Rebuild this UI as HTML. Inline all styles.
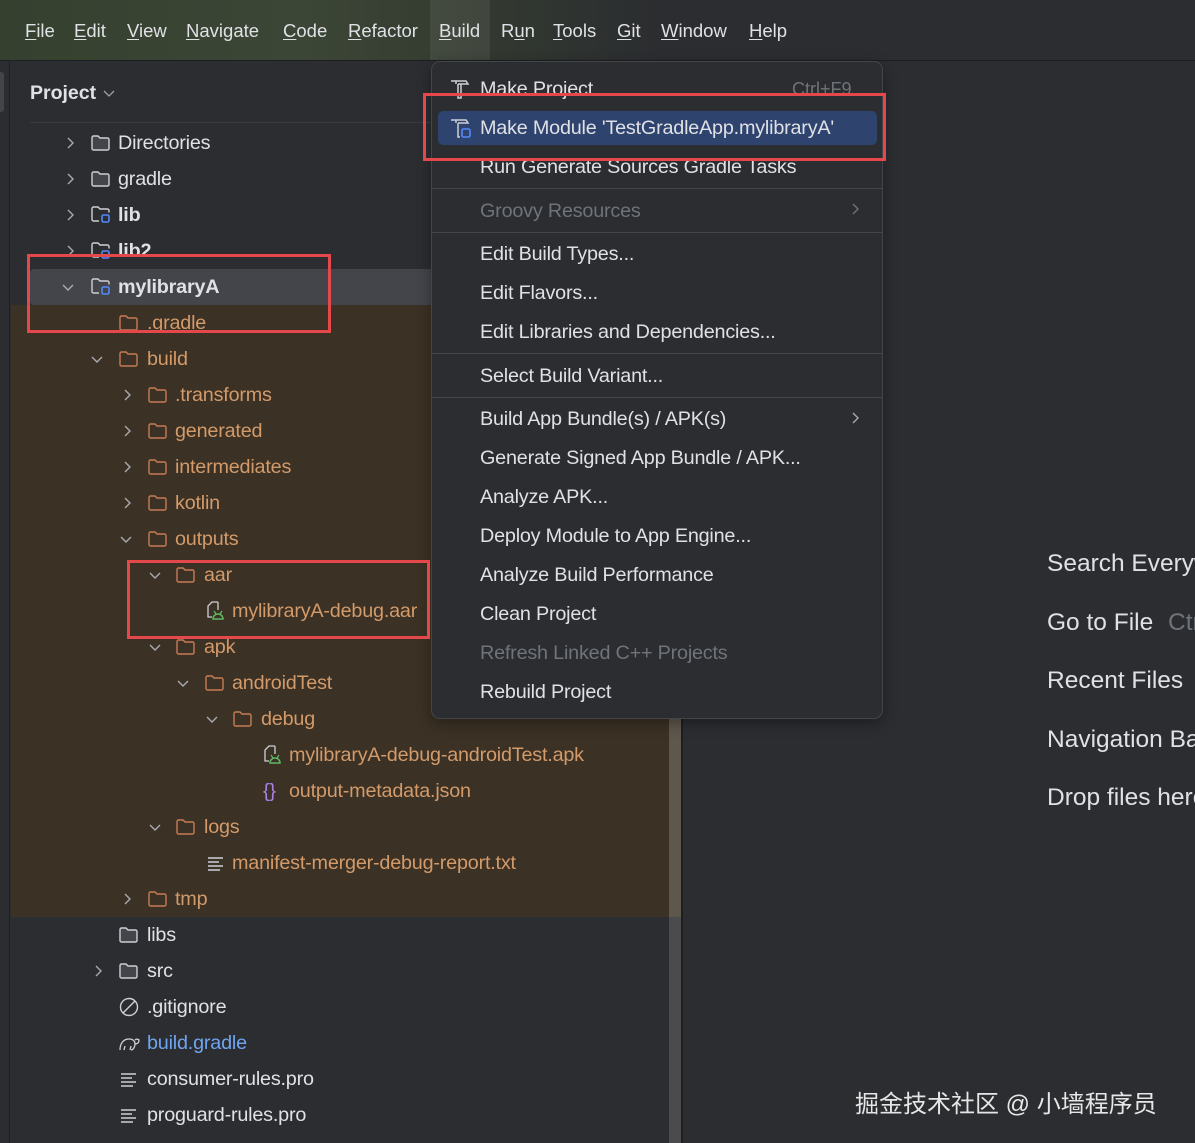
<!DOCTYPE html>
<html><head><meta charset="utf-8"><style>
*{margin:0;padding:0;box-sizing:border-box}
body{width:1195px;height:1143px;overflow:hidden;background:#2b2d30;font-family:"Liberation Sans","Noto Sans CJK SC",sans-serif;color:#dfe1e5;position:relative}
.a{position:absolute;white-space:nowrap}
.mb{position:absolute;left:0;top:0;width:1195px;height:61px;background:linear-gradient(90deg,#36402f 0%,#3c4636 25%,#333a30 40%,#2b2d30 55%,#2b2d30 100%);border-bottom:1px solid #1e1f22}
.mi{position:absolute;top:20px;font-size:18.5px;color:#dfe1e5}
.mi u{text-decoration:underline;text-underline-offset:2px}
.t{position:absolute;font-size:19.8px;line-height:24px;height:24px;white-space:nowrap;letter-spacing:-0.2px}
.o{color:#d39a6a}
.b{font-weight:bold}
.m{position:absolute;left:480px;font-size:19.8px;line-height:24px;white-space:nowrap;letter-spacing:-0.2px}
.dis{color:#6f737a}
.sep{position:absolute;left:432px;width:450px;height:1px;background:#43454a}
.rb{position:absolute;border:3px solid #e4484b}
.rt{position:absolute;left:0;font-size:24.5px;color:#dfe1e5;white-space:nowrap}
svg{position:absolute;overflow:visible}
</style></head><body>
<div class="mb"></div>
<div class="a" style="left:430px;top:0;width:60px;height:60px;background:rgba(255,255,255,0.07)"></div>
<div class="mi" style="left:25px"><u>F</u>ile</div>
<div class="mi" style="left:74px"><u>E</u>dit</div>
<div class="mi" style="left:127px"><u>V</u>iew</div>
<div class="mi" style="left:186px"><u>N</u>avigate</div>
<div class="mi" style="left:283px"><u>C</u>ode</div>
<div class="mi" style="left:348px"><u>R</u>efactor</div>
<div class="mi" style="left:439px"><u>B</u>uild</div>
<div class="mi" style="left:501px">R<u>u</u>n</div>
<div class="mi" style="left:553px"><u>T</u>ools</div>
<div class="mi" style="left:617px"><u>G</u>it</div>
<div class="mi" style="left:661px"><u>W</u>indow</div>
<div class="mi" style="left:749px"><u>H</u>elp</div>

<div class="a" style="left:0;top:61px;width:10px;height:1082px;background:#2b2d30;border-right:1px solid #1e1f22"></div>
<div class="a" style="left:0;top:72px;width:4px;height:40px;background:#43454a;border-radius:0 3px 3px 0"></div>
<div class="a" style="left:11px;top:61px;width:670px;height:1082px;background:#2b2d30"></div>
<div class="a" style="left:30px;top:82px;font-size:19.5px;font-weight:bold">Project</div>
<svg style="left:102px;top:88px" width="14" height="12"><path d="M2 3 l5 5 5-5" fill="none" stroke="#9da0a8" stroke-width="1.3"/></svg>
<div class="a" style="left:30px;top:122px;width:640px;height:1px;background:#393b40"></div>
<div class="a" style="left:11px;top:305px;width:658px;height:612px;background:#3b3124"></div>
<div class="a" style="left:30px;top:269px;width:640px;height:36px;background:#43454a;border-radius:4px"></div>
<div class="a" style="left:669px;top:61px;width:12px;height:1082px;background:#4b4b4d"></div>
<div class="a" style="left:669px;top:305px;width:12px;height:612px;background:#5e574c"></div>
<div class="a" style="left:681px;top:61px;width:2px;height:1082px;background:#1e1f22"></div>

<svg width="0" height="0" style="left:0;top:0"><defs>
<g id="cr"><path d="M3 0 l5 5 -5 5" fill="none" stroke="#a8abb0" stroke-width="1.4"/></g>
<g id="cd"><path d="M0 3 l5 5 5-5" fill="none" stroke="#a8abb0" stroke-width="1.4"/></g>
<g id="fg"><path d="M1 2.5a1.5 1.5 0 0 1 1.5-1.5h4.5l2 2h7.5a1.5 1.5 0 0 1 1.5 1.5v9a1.5 1.5 0 0 1-1.5 1.5h-14a1.5 1.5 0 0 1-1.5-1.5z" fill="#43454a" stroke="#ced0d6" stroke-width="1.4"/></g>
<g id="fo"><path d="M1 2.5a1.5 1.5 0 0 1 1.5-1.5h4.5l2 2h7.5a1.5 1.5 0 0 1 1.5 1.5v9a1.5 1.5 0 0 1-1.5 1.5h-14a1.5 1.5 0 0 1-1.5-1.5z" fill="#3b3124" stroke="#c77c54" stroke-width="1.4"/></g>
<g id="fm"><path d="M8 15h-5.5a1.5 1.5 0 0 1-1.5-1.5v-11a1.5 1.5 0 0 1 1.5-1.5h4.5l2 2h7.5a1.5 1.5 0 0 1 1.5 1.5v2" fill="none" stroke="#ced0d6" stroke-width="1.4"/><rect x="11" y="9" width="7" height="7" rx="1.5" fill="none" stroke="#548af7" stroke-width="1.6"/></g>
<g id="ad"><path d="M12 2h-6l-4 4v11h4" fill="none" stroke="#ced0d6" stroke-width="1.3"/><path d="M12 2v8" stroke="#ced0d6" stroke-width="1.3"/><path d="M7 19a5 5 0 0 1 10 0z" fill="none" stroke="#5fb865" stroke-width="1.5"/><path d="M8 11l2 3M16 11l-2 3" stroke="#5fb865" stroke-width="1.3"/></g>
<g id="tx"><path d="M1 3h15M1 7h11M1 11h15M1 15h12" stroke="#ced0d6" stroke-width="1.4"/></g>
</defs></svg>

<svg style="left:65px;top:138px" width="12" height="12"><use href="#cr"/></svg>
<svg style="left:91px;top:135px" width="20" height="18"><use href="#fg"/></svg>
<div class="t" style="left:118px;top:131px">Directories</div>
<svg style="left:65px;top:174px" width="12" height="12"><use href="#cr"/></svg>
<svg style="left:91px;top:171px" width="20" height="18"><use href="#fg"/></svg>
<div class="t" style="left:118px;top:167px">gradle</div>
<svg style="left:65px;top:210px" width="12" height="12"><use href="#cr"/></svg>
<svg style="left:91px;top:206px" width="20" height="18"><use href="#fm"/></svg>
<div class="t b" style="left:118px;top:203px">lib</div>
<svg style="left:65px;top:246px" width="12" height="12"><use href="#cr"/></svg>
<svg style="left:91px;top:242px" width="20" height="18"><use href="#fm"/></svg>
<div class="t b" style="left:118px;top:239px">lib2</div>
<svg style="left:63px;top:282px" width="12" height="12"><use href="#cd"/></svg>
<svg style="left:91px;top:278px" width="20" height="18"><use href="#fm"/></svg>
<div class="t b" style="left:118px;top:275px">mylibraryA</div>

<svg style="left:119px;top:315px" width="20" height="18"><use href="#fo"/></svg>
<div class="t o" style="left:147px;top:311px">.gradle</div>
<svg style="left:92px;top:354px" width="12" height="12"><use href="#cd"/></svg>
<svg style="left:119px;top:351px" width="20" height="18"><use href="#fo"/></svg>
<div class="t o" style="left:147px;top:347px">build</div>
<svg style="left:122px;top:390px" width="12" height="12"><use href="#cr"/></svg>
<svg style="left:148px;top:387px" width="20" height="18"><use href="#fo"/></svg>
<div class="t o" style="left:175px;top:383px">.transforms</div>
<svg style="left:122px;top:426px" width="12" height="12"><use href="#cr"/></svg>
<svg style="left:148px;top:423px" width="20" height="18"><use href="#fo"/></svg>
<div class="t o" style="left:175px;top:419px">generated</div>
<svg style="left:122px;top:462px" width="12" height="12"><use href="#cr"/></svg>
<svg style="left:148px;top:459px" width="20" height="18"><use href="#fo"/></svg>
<div class="t o" style="left:175px;top:455px">intermediates</div>
<svg style="left:122px;top:498px" width="12" height="12"><use href="#cr"/></svg>
<svg style="left:148px;top:495px" width="20" height="18"><use href="#fo"/></svg>
<div class="t o" style="left:175px;top:491px">kotlin</div>
<svg style="left:121px;top:534px" width="12" height="12"><use href="#cd"/></svg>
<svg style="left:148px;top:531px" width="20" height="18"><use href="#fo"/></svg>
<div class="t o" style="left:175px;top:527px">outputs</div>
<svg style="left:150px;top:570px" width="12" height="12"><use href="#cd"/></svg>
<svg style="left:176px;top:567px" width="20" height="18"><use href="#fo"/></svg>
<div class="t o" style="left:204px;top:563px">aar</div>
<svg style="left:206px;top:600px" width="20" height="20"><use href="#ad"/></svg>
<div class="t o" style="left:232px;top:599px">mylibraryA-debug.aar</div>
<svg style="left:150px;top:642px" width="12" height="12"><use href="#cd"/></svg>
<svg style="left:176px;top:639px" width="20" height="18"><use href="#fo"/></svg>
<div class="t o" style="left:204px;top:635px">apk</div>
<svg style="left:178px;top:678px" width="12" height="12"><use href="#cd"/></svg>
<svg style="left:205px;top:675px" width="20" height="18"><use href="#fo"/></svg>
<div class="t o" style="left:232px;top:671px">androidTest</div>
<svg style="left:207px;top:714px" width="12" height="12"><use href="#cd"/></svg>
<svg style="left:233px;top:711px" width="20" height="18"><use href="#fo"/></svg>
<div class="t o" style="left:261px;top:707px">debug</div>
<svg style="left:263px;top:744px" width="20" height="20"><use href="#ad"/></svg>
<div class="t o" style="left:289px;top:743px">mylibraryA-debug-androidTest.apk</div>
<div class="t" style="left:263px;top:779px;color:#a983e8">{}</div>
<div class="t o" style="left:289px;top:779px">output-metadata.json</div>
<svg style="left:150px;top:822px" width="12" height="12"><use href="#cd"/></svg>
<svg style="left:176px;top:819px" width="20" height="18"><use href="#fo"/></svg>
<div class="t o" style="left:204px;top:815px">logs</div>
<svg style="left:207px;top:855px" width="18" height="18"><use href="#tx"/></svg>
<div class="t o" style="left:232px;top:851px">manifest-merger-debug-report.txt</div>
<svg style="left:122px;top:894px" width="12" height="12"><use href="#cr"/></svg>
<svg style="left:148px;top:891px" width="20" height="18"><use href="#fo"/></svg>
<div class="t o" style="left:175px;top:887px">tmp</div>

<svg style="left:119px;top:927px" width="20" height="18"><use href="#fg"/></svg>
<div class="t" style="left:147px;top:923px">libs</div>
<svg style="left:93px;top:966px" width="12" height="12"><use href="#cr"/></svg>
<svg style="left:119px;top:963px" width="20" height="18"><use href="#fg"/></svg>
<div class="t" style="left:147px;top:959px">src</div>
<svg style="left:119px;top:997px" width="20" height="20"><circle cx="10" cy="10" r="8.5" fill="none" stroke="#ced0d6" stroke-width="1.4"/><path d="M4 16L16 4" stroke="#ced0d6" stroke-width="1.4"/></svg>
<div class="t" style="left:147px;top:995px">.gitignore</div>
<svg style="left:118px;top:1034px" width="24" height="18"><path d="M2 16c0-6 3-11 9-11 4 0 6 2 6 5 3 0 4-2 4-4-2-2-4 0-4 0M6 16l1-4M12 16l1-4M17 10c0 3-2 6-4 6" fill="none" stroke="#ced0d6" stroke-width="1.3"/></svg>
<div class="t" style="left:147px;top:1031px;color:#6fa4f0">build.gradle</div>
<svg style="left:120px;top:1071px" width="18" height="18"><use href="#tx"/></svg>
<div class="t" style="left:147px;top:1067px">consumer-rules.pro</div>
<svg style="left:120px;top:1107px" width="18" height="18"><use href="#tx"/></svg>
<div class="t" style="left:147px;top:1103px">proguard-rules.pro</div>

<div class="a" style="left:1047px;top:540px;width:148px;height:290px;overflow:hidden">
<div class="rt" style="top:10px">Search Everywhere</div>
<div class="rt" style="top:69px">Go to File <span style="color:#6f737a;margin-left:8px">Ctrl+Shift+N</span></div>
<div class="rt" style="top:127px">Recent Files</div>
<div class="rt" style="top:186px">Navigation Bar</div>
<div class="rt" style="top:244px">Drop files here</div>
</div>
<div class="a" style="left:855px;top:1084px;font-size:24px;color:#e6e6e6">掘金技术社区 @ 小墙程序员</div>

<div class="a" style="left:431px;top:61px;width:452px;height:658px;background:#2b2d30;border:1px solid #43454a;border-radius:9px;box-shadow:0 4px 14px rgba(0,0,0,.35)"></div>
<div class="a" style="left:438px;top:111px;width:439px;height:34px;background:#2e436e;border-radius:5px"></div>
<svg style="left:448px;top:77px" width="24" height="24"><path d="M3 4h15l2 3h-10M8 4v3M10 7v14h3V7" fill="none" stroke="#ced0d6" stroke-width="1.5"/></svg>
<div class="m" style="top:77px">Make Project</div>
<div class="a" style="left:792px;top:79px;font-size:18px;color:#6f737a">Ctrl+F9</div>
<svg style="left:448px;top:116px" width="26" height="26"><path d="M3 4h15l2 3h-10M8 4v3M10 7v14h2" fill="none" stroke="#ced0d6" stroke-width="1.5"/><rect x="14" y="13" width="8" height="8" rx="1.5" fill="none" stroke="#548af7" stroke-width="1.6"/></svg>
<div class="m" style="top:116px">Make Module 'TestGradleApp.mylibraryA'</div>
<div class="m" style="top:155px">Run Generate Sources Gradle Tasks</div>
<div class="sep" style="top:188px"></div>
<div class="m dis" style="top:199px">Groovy Resources</div>
<svg style="left:850px;top:204px" width="12" height="12"><path d="M3 0l5 5-5 5" fill="none" stroke="#6f737a" stroke-width="1.4"/></svg>
<div class="sep" style="top:232px"></div>
<div class="m" style="top:242px">Edit Build Types...</div>
<div class="m" style="top:281px">Edit Flavors...</div>
<div class="m" style="top:320px">Edit Libraries and Dependencies...</div>
<div class="sep" style="top:353px"></div>
<div class="m" style="top:364px">Select Build Variant...</div>
<div class="sep" style="top:397px"></div>
<div class="m" style="top:407px">Build App Bundle(s) / APK(s)</div>
<svg style="left:850px;top:413px" width="12" height="12"><path d="M3 0l5 5-5 5" fill="none" stroke="#a8abb0" stroke-width="1.4"/></svg>
<div class="m" style="top:446px">Generate Signed App Bundle / APK...</div>
<div class="m" style="top:485px">Analyze APK...</div>
<div class="m" style="top:524px">Deploy Module to App Engine...</div>
<div class="m" style="top:563px">Analyze Build Performance</div>
<div class="m" style="top:602px">Clean Project</div>
<div class="m dis" style="top:641px">Refresh Linked C++ Projects</div>
<div class="m" style="top:680px">Rebuild Project</div>

<div class="rb" style="left:423px;top:93px;width:463px;height:68px"></div>
<div class="rb" style="left:27px;top:254px;width:304px;height:79px"></div>
<div class="rb" style="left:127px;top:560px;width:303px;height:79px"></div>
</body></html>
